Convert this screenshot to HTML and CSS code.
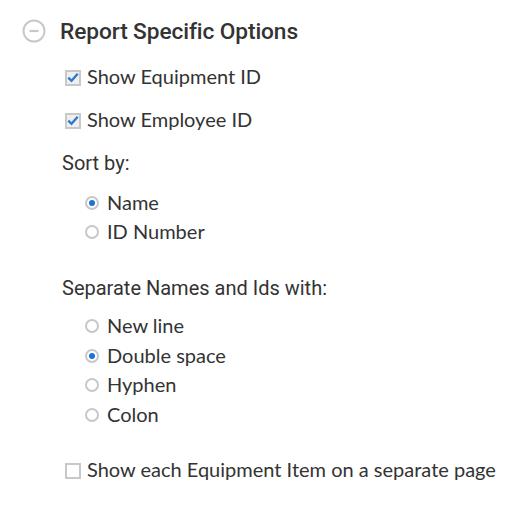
FILE: index.html
```html
<!DOCTYPE html>
<html>
<head>
<meta charset="utf-8">
<link rel="stylesheet" href="styles.css">
</head>
<body>
<div class="panel">
  <div class="header">
    <svg class="toggle" width="24" height="24" viewBox="0 0 24 24"><circle cx="12" cy="12" r="10.5" fill="none" stroke="#c8c8c8" stroke-width="2"/><line x1="7.5" y1="12" x2="16.5" y2="12" stroke="#c8c8c8" stroke-width="2.2"/></svg>
    <span class="title">Report Specific Options</span>
  </div>
  <div class="body">
    <label class="check"><span class="box checked"><svg width="12" height="11" viewBox="0 0 12 11"><path d="M1.3 5.6 L4.5 8.8 L10.7 1.8" fill="none" stroke="#2f79d0" stroke-width="2.4"/></svg></span>Show Equipment ID</label>
    <label class="check second"><span class="box checked"><svg width="12" height="11" viewBox="0 0 12 11"><path d="M1.3 5.6 L4.5 8.8 L10.7 1.8" fill="none" stroke="#2f79d0" stroke-width="2.4"/></svg></span>Show Employee ID</label>
    <div class="group-label sort">Sort by:</div>
    <div class="radios first">
      <label class="radio"><span class="dot on"></span>Name</label>
      <label class="radio"><span class="dot"></span>ID Number</label>
    </div>
    <div class="group-label sep">Separate Names and Ids with:</div>
    <div class="radios">
      <label class="radio"><span class="dot"></span>New line</label>
      <label class="radio"><span class="dot on"></span>Double space</label>
      <label class="radio"><span class="dot"></span>Hyphen</label>
      <label class="radio"><span class="dot"></span>Colon</label>
    </div>
    <label class="check last"><span class="box"></span>Show each Equipment Item on a separate page</label>
  </div>
</div>
</body>
</html>
```

FILE: styles.css
```css
html, body {
  margin: 0;
  padding: 0;
  background: #fff;
}
body {
  width: 521px;
  height: 510px;
  overflow: hidden;
  color: #333;
}
.panel {
  padding: 19px 0 0 22px;
}
.header {
  display: flex;
  align-items: center;
  height: 24px;
}
.toggle {
  display: block;
}
.title {
  font-family: Roboto, sans-serif;
  font-weight: 500;
  font-size: 22.7px;
  color: #333;
  margin-left: 14px;
  letter-spacing: -0.1px;
}
.body {
  padding-left: 40px;
  padding-top: 18px;
}
.check {
  display: flex;
  align-items: center;
  font-family: Lato, sans-serif;
  font-size: 20px;
  height: 30px;
  margin-left: 3px;
}
.check.second {
  margin-top: 13px;
}
.check.last {
  margin-top: 26px;
}
.box {
  width: 12px;
  height: 12px;
  border: 2px solid #c8c8c8;
  background: #fff;
  margin-right: 6px;
  margin-top: 3px;
  display: flex;
  align-items: center;
  justify-content: center;
  flex: none;
}
.box.checked {
  background: #efefef;
}
.group-label {
  font-family: Roboto, sans-serif;
  font-size: 20px;
  color: #333;
  height: 30px;
  display: flex;
  align-items: center;
}
.sort {
  margin-top: 14px;
}
.sep {
  margin-top: 27px;
}
.radios {
  padding-left: 22px;
  margin-top: 8px;
}
.radios.first {
  margin-top: 9px;
}
.radio {
  display: flex;
  align-items: center;
  font-family: Lato, sans-serif;
  font-size: 20px;
  height: 29.4px;
}
.dot {
  width: 10px;
  height: 10px;
  border: 2px solid #c8c8c8;
  border-radius: 50%;
  margin-right: 8px;
  margin-left: 1px;
  margin-top: 2px;
  display: flex;
  align-items: center;
  justify-content: center;
  flex: none;
  background: #fff;
}
.dot.on::after {
  content: "";
  width: 6px;
  height: 6px;
  border-radius: 50%;
  background: #1a73d9;
}
```
